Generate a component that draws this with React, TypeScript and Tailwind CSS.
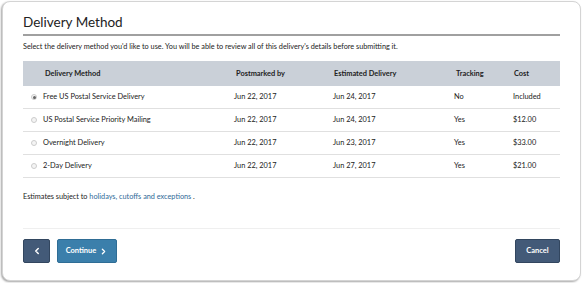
import { ChevronLeft, ChevronRight } from 'lucide-react';

const rows = [
  { method: 'Free US Postal Service Delivery', posted: 'Jun 22, 2017', est: 'Jun 24, 2017', track: 'No', cost: 'Included', checked: true },
  { method: 'US Postal Service Priority Mailing', posted: 'Jun 22, 2017', est: 'Jun 24, 2017', track: 'Yes', cost: '$12.00', checked: false },
  { method: 'Overnight Delivery', posted: 'Jun 22, 2017', est: 'Jun 23, 2017', track: 'Yes', cost: '$33.00', checked: false },
  { method: '2-Day Delivery', posted: 'Jun 22, 2017', est: 'Jun 27, 2017', track: 'Yes', cost: '$21.00', checked: false },
];

// column widths: radio | method | postmarked | estimated | tracking | cost
const cols = 'grid grid-cols-[20px_191px_99px_121px_59px_1fr]';

export default function App() {
  return (
    <div className="h-[283px] w-[582px] bg-white pl-[2px] pt-[1px]" style={{ fontFamily: 'Lato, "Open Sans", sans-serif' }}>
      <div className="flex h-[280px] w-[579px] flex-col rounded-[8px] border border-[#d4d4d4] bg-white px-[20px] shadow-[-1px_1px_2px_rgba(0,0,0,0.35)]">
        {/* header */}
        <h1 className="mt-[11px] text-[13.5px] leading-[18px] text-[#222]">Delivery Method</h1>
        <div className="mt-[3px] h-[2px] bg-[#a0a0a0]" />
        <p className="mt-[6px] text-[7.3px] leading-[10px] text-[#222]">
          Select the delivery method you'd like to use. You will be able to review all of this delivery's details before submitting it.
        </p>

        {/* table */}
        <div className="mt-[9px] text-[7.4px] text-[#222]">
          <div className={`${cols} h-[25px] items-center bg-[#cad0d8] font-bold`}>
            <span />
            <span className="pl-[2px]">Delivery Method</span>
            <span className="pl-[2px]">Postmarked by</span>
            <span className="pl-[1px]">Estimated Delivery</span>
            <span className="pl-[2px]">Tracking</span>
            <span className="pl-[1px]">Cost</span>
          </div>
          {rows.map((r) => (
            <div key={r.method} className={`${cols} h-[23px] items-center border-b border-[#e0e0e0] text-[#222]`}>
              <span className="flex justify-center pl-[2px]">
                <span className="flex h-[6px] w-[6px] items-center justify-center rounded-full border border-[#cccccc] bg-[#f4f4f4]">
                  {r.checked && <span className="h-[3px] w-[3px] rounded-full bg-[#666]" />}
                </span>
              </span>
              <span>{r.method}</span>
              <span>{r.posted}</span>
              <span>{r.est}</span>
              <span>{r.track}</span>
              <span className="text-[#222]">{r.cost}</span>
            </div>
          ))}
        </div>

        <p className="mt-[14px] text-[7.3px] leading-[10px] text-[#222]">
          Estimates subject to <span className="text-[#2f6a98]">holidays, cutoffs and exceptions</span> .
        </p>

        <div className="mt-[26px] h-px bg-[#efefef]" />

        {/* footer buttons */}
        <div className="mt-[10px] flex items-center">
          <button className="flex h-[24px] w-[27px] items-center justify-center rounded-[2px] border border-[#32465f] bg-[#435a78] text-white">
            <ChevronLeft size={10} strokeWidth={3.5} />
          </button>
          <button className="ml-[7px] flex h-[24px] w-[60px] items-center justify-center gap-[3px] rounded-[2px] border border-[#2f6d95] bg-[#3b7fab] text-[7.5px] font-bold text-white">
            Continue
            <ChevronRight size={9} strokeWidth={3.5} />
          </button>
          <button className="ml-auto h-[24px] w-[45px] rounded-[2px] border border-[#32465f] bg-[#435a78] text-[7.5px] font-bold text-white">
            Cancel
          </button>
        </div>
      </div>
    </div>
  );
}
